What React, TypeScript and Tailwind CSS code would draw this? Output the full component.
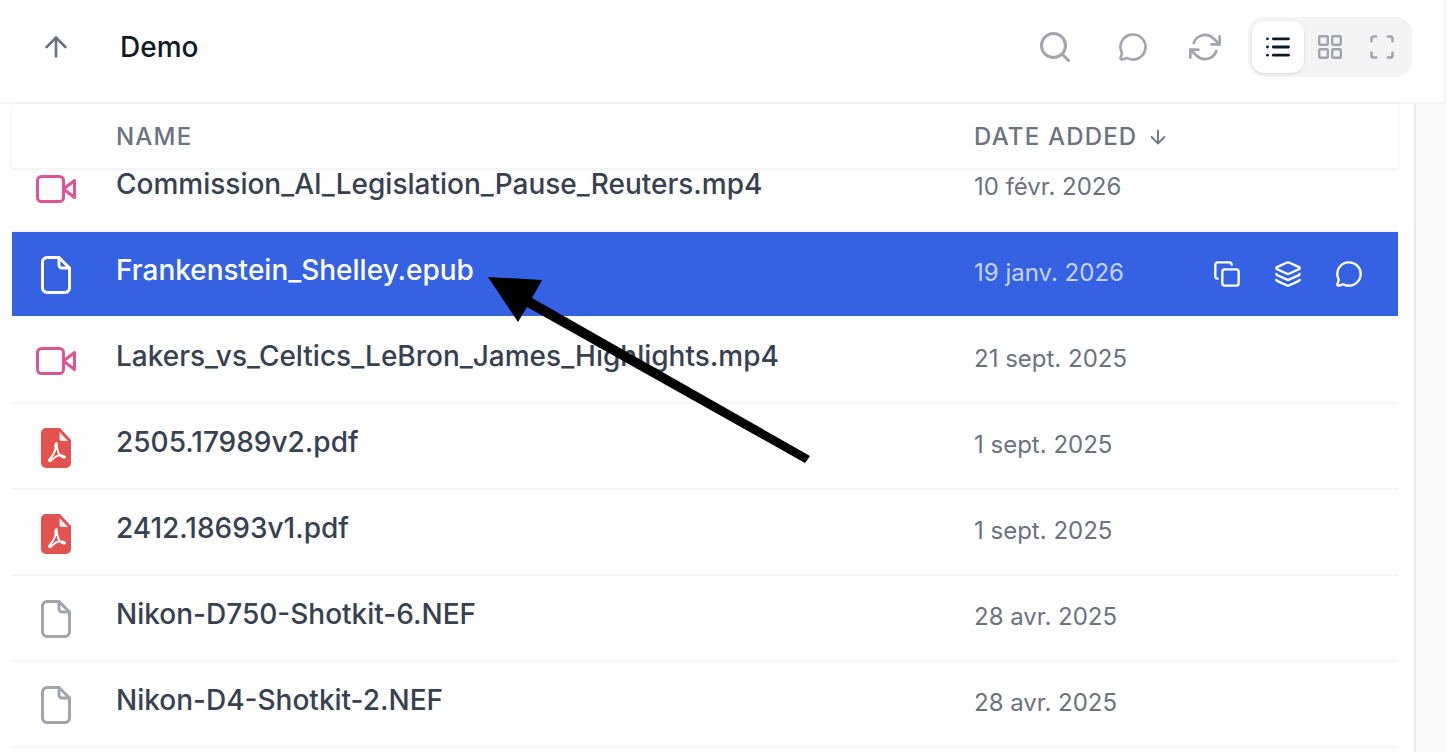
import { ArrowDown, ArrowUp, Copy, Layers, List, MessageCircle, Scan, Search } from 'lucide-react';

const VideoIcon = () => (
  <svg width="40" height="28" viewBox="0 0 40 28" fill="none" stroke="#dd5597" strokeWidth="3" strokeLinejoin="round" className="shrink-0">
    <rect x="1.5" y="1.5" width="26" height="25" rx="4" />
    <path d="M27.5 14 38.5 5.5v17z" />
  </svg>
);

const FileIcon = ({ color }: { color: string }) => (
  <svg width="30" height="38" viewBox="0 0 30 38" fill="none" stroke={color} strokeWidth="3" strokeLinejoin="round" strokeLinecap="round" className="shrink-0">
    <path d="M6 1.5h12L28.5 12v20a4.5 4.5 0 0 1-4.5 4.5H6A4.5 4.5 0 0 1 1.5 32V6A4.5 4.5 0 0 1 6 1.5z" />
    <path d="M18 1.5V9a3 3 0 0 0 3 3h7.5" />
  </svg>
);

const PdfIcon = () => (
  <svg width="30" height="40" viewBox="0 0 30 40" className="mt-[2px] shrink-0">
    <path d="M5 0h14l11 12v23a5 5 0 0 1-5 5H5a5 5 0 0 1-5-5V5a5 5 0 0 1 5-5z" fill="#e2524e" />
    <path d="M18.5 4 27 13h-6a2.5 2.5 0 0 1-2.5-2.5z" fill="#fbeeee" />
    <path
      d="M15.5 15.2c-1.400 0-1.500 3-.8 5.300C13.500 24.500 11 29 8.500 31.500c-1.200 1.200.3 2.500 1.600 1.200C12 31 14 28 18 27.300c2.500-.4 6 .8 6.200 1.700.2 1-3 .8-5.200-1.700-1.500-1.700-2.500-5-2.800-7.300-.3-2-.2-5-.7-5z"
      fill="none"
      stroke="#ffffff"
      strokeWidth="1.9"
      strokeLinejoin="round"
    />
  </svg>
);

const SyncIcon = () => (
  <svg width="32" height="32" viewBox="0 0 24 24" fill="none" stroke="currentColor" strokeWidth="2" strokeLinecap="round" strokeLinejoin="round">
    <path d="M23 4v6h-6" />
    <path d="M1 20v-6h6" />
    <path d="M3.510 9a9 9 0 0 1 14.850-3.360L23 10M1 14l4.640 4.360A9 9 0 0 0 20.490 15" />
  </svg>
);

type Row = { name: string; date: string; icon: 'video' | 'file' | 'pdf'; selected?: boolean };

const ROWS: Row[] = [
  { name: 'Commission_AI_Legislation_Pause_Reuters.mp4', date: '10 févr. 2026', icon: 'video' },
  { name: 'Frankenstein_Shelley.epub', date: '19 janv. 2026', icon: 'file', selected: true },
  { name: 'Lakers_vs_Celtics_LeBron_James_Highlights.mp4', date: '21 sept. 2025', icon: 'video' },
  { name: '2505.17989v2.pdf', date: '1 sept. 2025', icon: 'pdf' },
  { name: '2412.18693v1.pdf', date: '1 sept. 2025', icon: 'pdf' },
  { name: 'Nikon-D750-Shotkit-6.NEF', date: '28 avr. 2025', icon: 'file' },
  { name: 'Nikon-D4-Shotkit-2.NEF', date: '28 avr. 2025', icon: 'file' },
];

const FileRow = ({ row }: { row: Row }) => (
  <div className={row.selected ? 'flex h-[86px] shrink-0 border-b-2 border-white' : 'flex h-[86px] shrink-0 border-b-2 border-[#f6f6f7]'}>
    <div className={row.selected ? 'flex flex-1 items-center bg-[#3562e3]' : 'flex flex-1 items-center'}>
      <div className="mr-[16px] flex w-[88px] shrink-0 justify-center pt-[2px]">
        {row.icon === 'video' && <VideoIcon />}
        {row.icon === 'pdf' && <PdfIcon />}
        {row.icon === 'file' && <FileIcon color={row.selected ? '#ffffff' : '#a2a5ac'} />}
      </div>
      <div className={row.selected ? 'w-[858px] shrink-0 pb-[8px] text-[28px] font-medium text-white' : 'w-[858px] shrink-0 pb-[8px] text-[28px] font-medium text-[#374151]'}>
        {row.name}
      </div>
      <div className={row.selected ? 'flex-1 pb-[2px] text-[24px] text-[#c6d3f7]' : 'flex-1 pb-[2px] text-[24px] text-[#6b7280]'}>{row.date}</div>
      {row.selected && (
        <div className="flex items-center gap-[33px] pr-[35px] text-white">
          <Copy size={28} strokeWidth={2} />
          <Layers size={28} strokeWidth={2} />
          <MessageCircle size={28} strokeWidth={2} />
        </div>
      )}
    </div>
  </div>
);

export default function App() {
  return (
    <div className="flex h-[752px] w-[1448px] flex-col overflow-hidden bg-white font-['Inter',sans-serif]">
      {/* Top bar */}
      <div className="flex h-[104px] w-[1446px] shrink-0 items-center border-b-2 border-r-2 border-[#f3f4f6] pb-[8px]">
        <ArrowUp size={32} strokeWidth={2} className="ml-[40px] text-[#6b7280]" />
        <div className="ml-[48px] flex-1 text-[28px] font-medium text-[#111827]">Demo</div>
        <div className="flex items-center text-[#a2a5ac]">
          <Search size={36} strokeWidth={2} />
          <MessageCircle size={30} strokeWidth={2.1} className="ml-[45px]" />
          <div className="ml-[41px]">
            <SyncIcon />
          </div>
        </div>
        <div className="ml-[27px] mr-[32px] flex h-[60px] items-center rounded-[16px] bg-[#f3f4f6] p-[4px] text-[#a2a5ac]">
          <div className="flex h-[52px] w-[52px] items-center justify-center rounded-[12px] bg-white text-[#111827] shadow-sm">
            <List size={28} strokeWidth={2.4} />
          </div>
          <div className="flex h-[52px] w-[52px] items-center justify-center">
            <svg width="24" height="24" viewBox="0 0 24 24" fill="none" stroke="currentColor" strokeWidth="2.4">
              <rect x="1.2" y="1.2" width="8.6" height="8.6" rx="1" />
              <rect x="14.2" y="1.2" width="8.6" height="8.6" rx="1" />
              <rect x="1.2" y="14.2" width="8.6" height="8.6" rx="1" />
              <rect x="14.2" y="14.2" width="8.6" height="8.6" rx="1" />
            </svg>
          </div>
          <div className="flex h-[52px] w-[52px] items-center justify-center">
            <Scan size={28} strokeWidth={2.2} />
          </div>
        </div>
      </div>

      {/* Table and scrollbar */}
      <div className="relative flex min-h-0 flex-1">
        <div className="flex min-w-0 flex-1 flex-col pl-[12px] pr-[16px]">
          <div className="relative z-10 flex h-[64px] w-[1386px] shrink-0 items-center bg-white pt-[2px] text-[24px] font-medium tracking-[0.05em] text-[#6b7280] shadow-[0_1px_4px_rgba(0,0,0,0.08)]">
            <div className="w-[963px] pl-[104px]">NAME</div>
            <div className="-ml-[1px] flex items-center gap-[10px]">
              DATE ADDED
              <ArrowDown size={22} strokeWidth={2} />
            </div>
          </div>
          <div className="-mt-[22px] flex flex-col">
            {ROWS.map((row) => (
              <FileRow key={row.name} row={row} />
            ))}
          </div>
        </div>
        <div className="w-[31px] shrink-0 border-l-2 border-[#e9e9ea] bg-[#fafafa]" />
        <div className="w-[3px] shrink-0 bg-white" />

        {/* Annotation arrow lying over the list */}
        <svg className="pointer-events-none absolute left-0 top-[-104px] z-20" width="1448" height="752" viewBox="0 0 1448 752">
          <polygon points="488,277 542,280 532,298 810,456 805,463 527,307 518,322" fill="#000000" />
        </svg>
      </div>
    </div>
  );
}
